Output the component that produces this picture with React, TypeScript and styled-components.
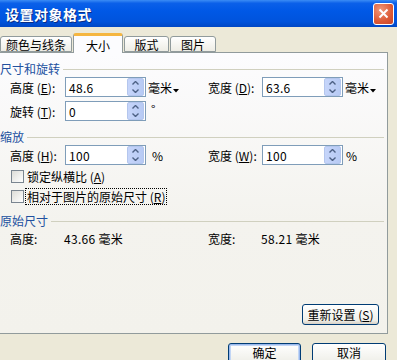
import styled, { createGlobalStyle } from "styled-components";

const GlobalStyle = createGlobalStyle`
  html, body {
    margin: 0;
    padding: 0;
    background: #ece9d8;
  }
  body {
    font-family: "Noto Sans CJK SC", "Liberation Sans", sans-serif;
    font-size: 12px;
    color: #000;
  }
`;

const Window = styled.div`
  width: 397px;
  height: 360px;
  overflow: hidden;
  display: flex;
  flex-direction: column;
  background: #ece9d8;
`;

const TitleBar = styled.div`
  height: 27px;
  flex: none;
  display: flex;
  align-items: center;
  justify-content: space-between;
  padding: 0 3px 0 5px;
  background: linear-gradient(
    #3b8cf5 0%,
    #0b60e9 12%,
    #0058e6 40%,
    #0053dc 80%,
    #0047c4 100%
  );
`;

const Title = styled.div`
  color: #fff;
  font-size: 14px;
  font-weight: bold;
  letter-spacing: 0.5px;
  text-shadow: 1px 1px 0 #0a2d85;
`;

const CloseButton = styled.div`
  width: 19px;
  height: 20px;
  border: 1px solid #fff;
  border-radius: 3px;
  display: flex;
  align-items: center;
  justify-content: center;
  background: radial-gradient(circle at 35% 30%, #f0987a, #dc5a36 60%, #c8442a);
`;

const Body = styled.div`
  flex: 1;
  display: flex;
  flex-direction: column;
  padding: 4px 9px 0 0;
`;

const TabStrip = styled.div`
  height: 21px;
  display: flex;
  align-items: flex-end;
  gap: 1px;
  position: relative;
  z-index: 1;
`;

const Tab = styled.div<{ $active?: boolean; $width: number }>`
  box-sizing: border-box;
  width: ${({ $width }) => $width}px;
  height: ${({ $active }) => ($active ? 20 : 16)}px;
  margin-bottom: ${({ $active }) => ($active ? -1 : 0)}px;
  display: flex;
  align-items: center;
  justify-content: center;
  padding-top: ${({ $active }) => ($active ? 1 : 0)}px;
  border: 1px solid #919b9c;
  border-bottom: ${({ $active }) => ($active ? "none" : "1px solid #919b9c")};
  border-top: ${({ $active }) => ($active ? "3px solid #f5b640" : "1px solid #919b9c")};
  border-radius: 3px 3px 0 0;
  background: ${({ $active }) =>
    $active ? "#fcfcfe" : "linear-gradient(#ffffff, #eeede5)"};
  font-size: 12px;
  white-space: nowrap;
`;

const Panel = styled.div`
  box-sizing: border-box;
  height: 282px;
  border: 1px solid #919b9c;
  border-left: none;
  background: linear-gradient(#fcfcfe, #f4f3ee 60%, #f3f2ec);
  display: flex;
  flex-direction: column;
  padding: 0 3px 8px 0;
`;

const SectionHeader = styled.div<{ $top: number }>`
  height: 14px;
  margin-top: ${({ $top }) => $top}px;
  display: flex;
  align-items: center;
  gap: 3px;
  color: #21509f;
  font-size: 12px;
  line-height: 14px;
  white-space: nowrap;

  &::after {
    content: "";
    flex: 1;
    border-top: 1px solid #d0d0bf;
  }
`;

const Row = styled.div<{ $top: number }>`
  height: 20px;
  margin-top: ${({ $top }) => $top}px;
  display: flex;
  align-items: center;
  padding-left: 10px;
`;

const Field = styled.div<{ $width?: number }>`
  display: flex;
  align-items: center;
  width: ${({ $width }) => ($width ? `${$width}px` : "auto")};
`;

const Label = styled.span<{ $width: number }>`
  width: ${({ $width }) => $width}px;
  white-space: nowrap;
  font-size: 12px;
`;

const SpinBox = styled.div`
  box-sizing: border-box;
  width: 81px;
  height: 20px;
  border: 1px solid #7f9db9;
  background: #fff;
  display: flex;
  align-items: center;
  padding: 1px;
`;

const SpinValue = styled.span`
  flex: 1;
  padding-left: 2px;
  font-size: 12px;
  letter-spacing: 0.3px;
`;

const SpinButtons = styled.div`
  width: 15px;
  height: 16px;
  display: flex;
  flex-direction: column;
  border-radius: 2px;
  overflow: hidden;
  border: 1px solid #b4c6ed;
  background: linear-gradient(to right, #c6d5fa, #b7caf4);
`;

const SpinHalf = styled.div`
  flex: 1;
  display: flex;
  align-items: center;
  justify-content: center;
`;

const Unit = styled.span<{ $gap?: number }>`
  margin-left: ${({ $gap }) => $gap ?? 2}px;
  font-size: 12px;
  white-space: nowrap;
`;

const Degree = styled.span`
  margin-left: 5px;
  font-size: 12px;
  position: relative;
  top: -3px;
`;

const CheckRow = styled.div<{ $top: number }>`
  height: 17px;
  margin-top: ${({ $top }) => $top}px;
  display: flex;
  align-items: center;
  padding-left: 11px;
`;

const CheckBox = styled.div`
  box-sizing: border-box;
  width: 13px;
  height: 13px;
  border: 1px solid #7a8590;
  background: linear-gradient(135deg, #dcdcd7, #ffffff);
  margin-right: 2px;
`;

const CheckLabel = styled.span<{ $focused?: boolean }>`
  font-size: 12px;
  padding: 0 1px;
  line-height: 15px;
  outline: ${({ $focused }) => ($focused ? "1px dotted #000" : "none")};
  white-space: nowrap;
`;

const InfoRow = styled.div`
  height: 16px;
  margin-top: 2px;
  display: flex;
  align-items: center;
  padding-left: 10px;
  font-size: 12px;
`;

const InfoValue = styled.span`
  letter-spacing: 0.3px;
  white-space: nowrap;
`;

const Spacer = styled.div`
  flex: 1;
`;

const ActionRow = styled.div`
  display: flex;
  justify-content: flex-end;
  padding-right: 5px;
`;

const XPButton = styled.div<{ $width: number; $default?: boolean; $tall?: boolean }>`
  box-sizing: border-box;
  width: ${({ $width }) => $width}px;
  height: ${({ $tall }) => ($tall ? 23 : 21)}px;
  border: 1px solid #003c74;
  border-radius: 3px;
  display: flex;
  align-items: ${({ $tall }) => ($tall ? "flex-start" : "center")};
  justify-content: center;
  padding-top: ${({ $tall }) => ($tall ? 1 : 0)}px;
  line-height: 15px;
  background: linear-gradient(#ffffff, #f0f0ea 80%, #d6d0c5);
  box-shadow: ${({ $default }) =>
    $default ? "inset 0 0 0 1px #9ab9ed, inset 0 0 0 2px #c2d6f5" : "none"};
  font-size: 12px;
  white-space: nowrap;
`;

const Footer = styled.div`
  display: flex;
  justify-content: flex-end;
  gap: 11px;
  padding: 9px 2px 0 0;
`;

const Arrow = ({ up }: { up?: boolean }) => (
  <svg width="7" height="4" viewBox="0 0 7 4">
    <path
      d={up ? "M0.5 3.5 L3.5 0.5 L6.5 3.5" : "M0.5 0.5 L3.5 3.5 L6.5 0.5"}
      fill="none"
      stroke="#4d6185"
      strokeWidth="1.4"
    />
  </svg>
);

const Spin = ({ value }: { value: string }) => (
  <SpinBox>
    <SpinValue>{value}</SpinValue>
    <SpinButtons>
      <SpinHalf>
        <Arrow up />
      </SpinHalf>
      <SpinHalf>
        <Arrow />
      </SpinHalf>
    </SpinButtons>
  </SpinBox>
);

const Key = ({ k }: { k: string }) => (
  <>
    (<u>{k}</u>)
  </>
);

const UnitDrop = () => (
  <Unit>
    毫米
    <svg width="6" height="4" viewBox="0 0 6 4" style={{ marginLeft: 1 }}>
      <path d="M0 0 H6 L3 3.5 Z" fill="#000" />
    </svg>
  </Unit>
);

export default function App() {
  return (
    <Window>
      <GlobalStyle />
      <TitleBar>
        <Title>设置对象格式</Title>
        <CloseButton>
          <svg width="11" height="11" viewBox="0 0 11 11">
            <path d="M1.5 1.5 L9.5 9.5 M9.5 1.5 L1.5 9.5" stroke="#fff" strokeWidth="2" />
          </svg>
        </CloseButton>
      </TitleBar>
      <Body>
        <TabStrip>
          <Tab $width={72}>颜色与线条</Tab>
          <Tab $width={50} $active>
            大小
          </Tab>
          <Tab $width={45}>版式</Tab>
          <Tab $width={46}>图片</Tab>
        </TabStrip>
        <Panel>
          <SectionHeader $top={9}>尺寸和旋转</SectionHeader>
          <Row $top={1}>
            <Field $width={198}>
              <Label $width={55}>
                高度 <Key k="E" />:
              </Label>
              <Spin value="48.6" />
              <UnitDrop />
            </Field>
            <Field>
              <Label $width={54}>
                宽度 <Key k="D" />:
              </Label>
              <Spin value="63.6" />
              <UnitDrop />
            </Field>
          </Row>
          <Row $top={4}>
            <Field $width={198}>
              <Label $width={55}>
                旋转 <Key k="T" />:
              </Label>
              <Spin value="0" />
              <Degree>°</Degree>
            </Field>
          </Row>
          <SectionHeader $top={9}>缩放</SectionHeader>
          <Row $top={1}>
            <Field $width={198}>
              <Label $width={55}>
                高度 <Key k="H" />:
              </Label>
              <Spin value="100" />
              <Unit $gap={6}>%</Unit>
            </Field>
            <Field>
              <Label $width={54}>
                宽度 <Key k="W" />:
              </Label>
              <Spin value="100" />
              <Unit $gap={3}>%</Unit>
            </Field>
          </Row>
          <CheckRow $top={3}>
            <CheckBox />
            <CheckLabel>
              锁定纵横比 <Key k="A" />
            </CheckLabel>
          </CheckRow>
          <CheckRow $top={3}>
            <CheckBox />
            <CheckLabel $focused>
              相对于图片的原始尺寸 <Key k="R" />
            </CheckLabel>
          </CheckRow>
          <SectionHeader $top={9}>原始尺寸</SectionHeader>
          <InfoRow>
            <Field $width={198}>
              <Label $width={54}>高度:</Label>
              <InfoValue>43.66 毫米</InfoValue>
            </Field>
            <Field>
              <Label $width={53}>宽度:</Label>
              <InfoValue>58.21 毫米</InfoValue>
            </Field>
          </InfoRow>
          <Spacer />
          <ActionRow>
            <XPButton $width={77}>
              重新设置 <Key k="S" />
            </XPButton>
          </ActionRow>
        </Panel>
        <Footer>
          <XPButton $width={73} $default $tall>
            确定
          </XPButton>
          <XPButton $width={74} $tall>
            取消
          </XPButton>
        </Footer>
      </Body>
    </Window>
  );
}
